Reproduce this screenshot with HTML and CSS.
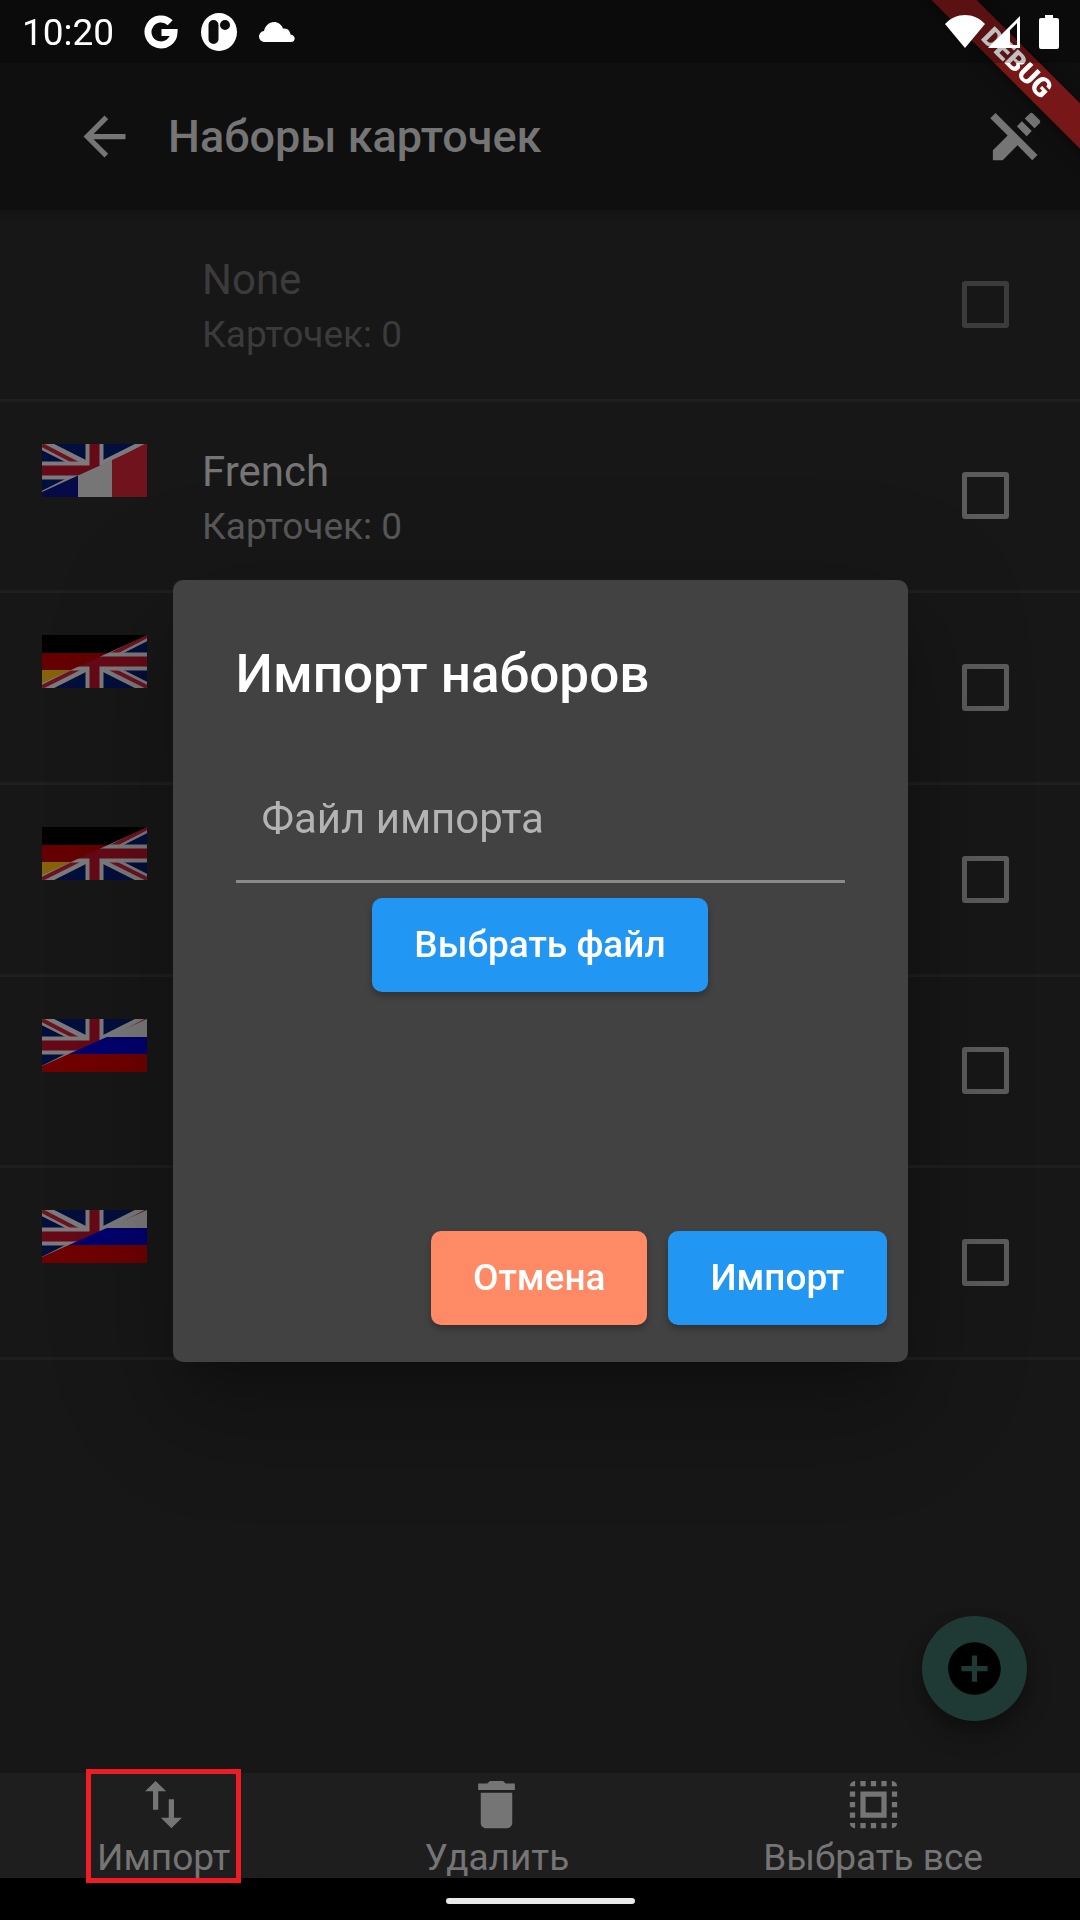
FILE: index.html
```html
<!DOCTYPE html>
<html lang="ru">
<head>
<meta charset="utf-8">
<meta name="viewport" content="width=device-width, initial-scale=1">
<title>Наборы карточек</title>
<link rel="stylesheet" href="styles.css">
</head>
<body>
<svg class="sprite" aria-hidden="true">
  <symbol id="union-jack" viewBox="0 0 105 53" preserveAspectRatio="none">
    <rect width="105" height="53" fill="#000f3c"/>
    <path d="M0 0L105 53M105 0L0 53" stroke="#7c7a7c" stroke-width="11"/>
    <path d="M0 1L52 28M105 1L53 28M52 26L0 52M53 26L105 52" stroke="#6b1420" stroke-width="4"/>
    <path d="M52.500 0V53M0 26.500H105" stroke="#7c7a7c" stroke-width="18"/>
    <path d="M52.500 0V53M0 26.500H105" stroke="#650a16" stroke-width="10"/>
  </symbol>
  <symbol id="flag-fr" viewBox="0 0 105 53">
    <use href="#union-jack" width="105" height="53"/>
    <clipPath id="clip-fr"><path d="M0 48L105 0V53H0Z"/></clipPath>
    <g clip-path="url(#clip-fr)">
      <path fill="#060a46" d="M0 0H36V53H0z"/>
      <path fill="#767676" d="M36 0H70V53H36z"/>
      <path fill="#70131c" d="M70 0H105V53H70z"/>
    </g>
  </symbol>
  <symbol id="flag-de" viewBox="0 0 105 53">
    <use href="#union-jack" width="105" height="53"/>
    <path fill="#000" d="M0 0H105L66 18H0z"/>
    <path fill="#650000" d="M0 18H66L29 35H0z"/>
    <path fill="#846309" d="M0 35H29L0 48z"/>
  </symbol>
  <symbol id="flag-ru" viewBox="0 0 105 53">
    <use href="#union-jack" width="105" height="53"/>
    <clipPath id="clip-ru"><path d="M0 47L105 0V53H0Z"/></clipPath>
    <g clip-path="url(#clip-ru)">
      <path fill="#7a7a7a" d="M0 0H105V18H0z"/>
      <path fill="#00006e" d="M0 18H105V35H0z"/>
      <path fill="#700000" d="M0 35H105V53H0z"/>
    </g>
  </symbol>
</svg>

<div class="status-bar">
  <span class="status-time">10:20</span>
  <div class="status-notices">
    <svg width="36" height="36" viewBox="0 0 36 36"><path d="M27.200 8.800A13 13 0 1 0 31 18.500H18.500" fill="none" stroke="#fff" stroke-width="7"/></svg>
    <svg width="36" height="38" viewBox="0 0 36 38"><path fill="#fff" fill-rule="evenodd" d="M18 0a18 19 0 0 1 0 38a18 19 0 0 1 0-38zM12.500 7a5 5 0 0 0-5 5v14a5 5 0 0 0 10 0V12a5 5 0 0 0-5-5zM24 7a5 5 0 1 0 0 10a5 5 0 0 0 0-10z"/></svg>
    <svg width="36" height="20" viewBox="0 0 36 20"><path fill="#fff" d="M6 20a5.500 5.500 0 0 1-1-11C6 4 10 0 15 0c4 0 7.500 2.500 9 6.500c5-.5 7 2.500 7.500 6C37 13 37 20 32 20z"/></svg>
  </div>
  <div class="status-system">
    <svg width="40" height="34" viewBox="0 0 40 34"><path fill="#fff" d="M0 9C11-3 29-3 40 9L20 33z"/></svg>
    <svg width="34" height="34" viewBox="0 0 34 34"><path fill="#fff" fill-rule="evenodd" d="M33 1V33H1zM30 8L23 15V30H30z"/></svg>
    <svg width="20" height="34" viewBox="0 0 20 34"><path fill="#fff" d="M6 0h8v3h4a2 2 0 0 1 2 2v27a2 2 0 0 1-2 2H2a2 2 0 0 1-2-2V5a2 2 0 0 1 2-2h4z"/></svg>
  </div>
</div>

<div class="screen">
  <header class="app-bar">
    <button class="icon-button" type="button" aria-label="Назад">
      <svg class="icon" viewBox="0 0 24 24"><path d="M20 11H7.830l5.590-5.590L12 4l-8 8 8 8 1.410-1.410L7.830 13H20v-2z"/></svg>
    </button>
    <h1 class="app-title">Наборы карточек</h1>
    <button class="icon-button" type="button" aria-label="Закончить правку">
      <svg class="icon" viewBox="0 0 24 24"><path d="M12.126 8.125l1.937-1.937 3.747 3.747-1.937 1.938zM20.710 5.630l-2.340-2.340a1 1 0 0 0-1.410 0l-1.830 1.830 3.750 3.750 1.830-1.830a1 1 0 0 0 0-1.410zM2 5l6.630 6.630L3 17.250V21h3.750l5.630-5.620L18 21l2-2L4 3 2 5z"/></svg>
    </button>
  </header>

  <main class="content">
    <ul class="deck-list">
      <li class="deck deck-disabled">
        <span class="deck-flag"></span>
        <label class="deck-text" for="deck-1"><span class="deck-name">None</span><span class="deck-count">Карточек: 0</span></label>
        <input class="deck-check" type="checkbox" id="deck-1" disabled>
      </li>
      <li class="deck">
        <svg class="deck-flag"><use href="#flag-fr"/></svg>
        <label class="deck-text" for="deck-2"><span class="deck-name">French</span><span class="deck-count">Карточек: 0</span></label>
        <input class="deck-check" type="checkbox" id="deck-2">
      </li>
      <li class="deck">
        <svg class="deck-flag"><use href="#flag-de"/></svg>
        <span class="deck-text"></span>
        <input class="deck-check" type="checkbox" aria-label="Набор 3">
      </li>
      <li class="deck">
        <svg class="deck-flag"><use href="#flag-de"/></svg>
        <span class="deck-text"></span>
        <input class="deck-check" type="checkbox" aria-label="Набор 4">
      </li>
      <li class="deck">
        <svg class="deck-flag"><use href="#flag-ru"/></svg>
        <span class="deck-text"></span>
        <input class="deck-check" type="checkbox" aria-label="Набор 5">
      </li>
      <li class="deck">
        <svg class="deck-flag"><use href="#flag-ru"/></svg>
        <span class="deck-text"></span>
        <input class="deck-check" type="checkbox" aria-label="Набор 6">
      </li>
    </ul>
    <button class="fab" type="button" aria-label="Добавить набор">
      <svg class="icon" viewBox="0 0 24 24"><path d="M12 2C6.480 2 2 6.480 2 12s4.480 10 10 10 10-4.480 10-10S17.520 2 12 2zm5 11h-4v4h-2v-4H7v-2h4V7h2v4h4v2z"/></svg>
    </button>
  </main>

  <nav class="bottom-bar">
    <button class="bottom-item highlighted" type="button">
      <svg class="icon" viewBox="0 0 24 24"><path d="M9 3L5 6.990h3V14h2V6.990h3L9 3zm7 14.010V10h-2v7.010h-3L15 21l4-3.990h-3z"/></svg>
      <span class="bottom-label">Импорт</span>
    </button>
    <button class="bottom-item" type="button">
      <svg class="icon" viewBox="0 0 24 24"><path d="M6 19c0 1.100.9 2 2 2h8c1.100 0 2-.9 2-2V7.500H6zM19 4h-3.500l-1-1h-5l-1 1H5v2.500h14z"/></svg>
      <span class="bottom-label">Удалить</span>
    </button>
    <button class="bottom-item" type="button">
      <svg class="icon" viewBox="0 0 24 24"><path d="M3 5h2V3c-1.100 0-2 .9-2 2zm0 8h2v-2H3v2zm4 8h2v-2H7v2zM3 9h2V7H3v2zm10-6h-2v2h2V3zm6 0v2h2c0-1.100-.9-2-2-2zM5 21v-2H3c0 1.100.9 2 2 2zm-2-4h2v-2H3v2zM9 3H7v2h2V3zm2 18h2v-2h-2v2zm8-8h2v-2h-2v2zm0 8c1.100 0 2-.9 2-2h-2v2zm0-12h2V7h-2v2zm0 8h2v-2h-2v2zm-4 4h2v-2h-2v2zm0-16h2V3h-2v2zM7 17h10V7H7v10zm2-8h6v6H9V9z"/></svg>
      <span class="bottom-label">Выбрать все</span>
    </button>
  </nav>
  <div class="gesture-bar"><span class="gesture-handle"></span></div>
</div>

<div class="overlay">
  <form class="dialog" role="dialog" aria-modal="true" aria-labelledby="dialog-title">
    <h2 class="dialog-title" id="dialog-title">Импорт наборов</h2>
    <div class="dialog-body">
      <input class="file-field" type="text" placeholder="Файл импорта" aria-label="Файл импорта">
      <button class="button" type="button">Выбрать файл</button>
    </div>
    <div class="dialog-actions">
      <button class="button button-cancel" type="button">Отмена</button>
      <button class="button" type="submit">Импорт</button>
    </div>
  </form>
</div>

<div class="debug-corner"><span class="debug-banner">DEBUG</span></div>
</body>
</html>
```
FILE: styles.css
```css
* {
  box-sizing: border-box;
}

body {
  margin: 0;
  background: #171717;
  color: #757575;
  font-family: Roboto, "Noto Sans", sans-serif;
  font-size: 37px;
  line-height: 43px;
}

button,
input {
  margin: 0;
  padding: 0;
  border: 0;
  background: none;
  color: inherit;
  font: inherit;
}

h1,
h2,
ul {
  margin: 0;
  padding: 0;
}

svg {
  display: block;
}

.sprite {
  position: absolute;
  width: 0;
  height: 0;
}

.icon {
  width: 63px;
  height: 63px;
  fill: currentColor;
}

/* System status bar, drawn over the app */
.status-bar {
  position: fixed;
  inset: 0 0 auto;
  z-index: 4;
  display: flex;
  align-items: center;
  height: 63px;
  padding: 0 21px 0 22px;
  background: rgba(0, 0, 0, 0.25);
  color: #fff;
}

.status-time {
  padding-top: 2px;
}

.status-notices {
  display: flex;
  flex: 1;
  align-items: center;
  gap: 22px;
  margin-left: 29px;
}

.status-system {
  display: flex;
  gap: 2px;
}

.status-system svg:last-child {
  margin-left: 16px;
}

.screen {
  display: flex;
  flex-direction: column;
  min-height: 100vh;
}

/* App bar */
.app-bar {
  position: relative;
  display: flex;
  align-items: center;
  padding: 63px 32px 0 73px;
  min-height: 210px;
  background: #0f0f0f;
  box-shadow: 0 4px 8px rgba(0, 0, 0, 0.2);
}

.app-title {
  flex: 1;
  padding-left: 32px;
  font-size: 45px;
  font-weight: 500;
  line-height: 52px;
}

/* Deck list */
.content {
  position: relative;
  flex: 1;
}

.deck-list {
  display: grid;
  grid-auto-rows: 1fr;
  min-height: 1150px;
  list-style: none;
}

.deck {
  display: flex;
  align-items: flex-start;
  padding: 0 71px 0 42px;
  border-bottom: 3px solid #1f1f1f;
}

.deck-flag {
  flex: none;
  width: 105px;
  height: 53px;
  margin-top: 42px;
}

.deck-text {
  display: flex;
  flex: 1;
  flex-direction: column;
  gap: 9px;
  padding: 45px 0 0 55px;
}

.deck-name {
  font-size: 42px;
  line-height: 49px;
}

.deck-count {
  color: #585858;
}

.deck-check {
  appearance: none;
  flex: none;
  align-self: center;
  width: 47px;
  height: 47px;
  border: 5px solid #5b5b5b;
  border-radius: 3px;
}

.deck-disabled,
.deck-disabled .deck-count {
  color: #3b3b3b;
}

.deck-disabled .deck-check {
  border-color: #3b3b3b;
}

.fab {
  position: absolute;
  right: 53px;
  bottom: 52px;
  display: grid;
  place-items: center;
  width: 105px;
  height: 105px;
  border-radius: 50%;
  background: #1f3a34;
  color: #000;
  box-shadow: 0 14px 24px rgba(0, 0, 0, 0.25), 0 4px 12px rgba(0, 0, 0, 0.2);
}

/* Bottom bar */
.bottom-bar {
  display: flex;
  justify-content: space-around;
  height: 105px;
  background: #1e1e1e;
}

.bottom-item {
  position: relative;
  display: flex;
  flex-direction: column;
  align-items: center;
}

.bottom-label {
  margin-bottom: -2px;
  line-height: 44px;
}

.highlighted {
  z-index: 1;
}

.highlighted::after {
  content: "";
  position: absolute;
  inset: -4px -11px -5px;
  border: 5px solid #ee1c24;
}

.gesture-bar {
  display: grid;
  place-items: center;
  height: 42px;
  padding-top: 4px;
  background: #000;
}

.gesture-handle {
  width: 189px;
  height: 6px;
  border-radius: 3px;
  background: #e9e9e9;
}

/* Import dialog */
.overlay {
  position: fixed;
  inset: 0;
  z-index: 2;
  display: grid;
  place-items: center;
  padding: 63px 0 42px;
}

.dialog {
  width: 735px;
  max-width: 100%;
  border-radius: 10px;
  background: #424242;
  color: #fff;
  box-shadow:
    0 29px 39px -18px rgba(0, 0, 0, 0.2),
    0 63px 100px 8px rgba(0, 0, 0, 0.14),
    0 24px 120px 21px rgba(0, 0, 0, 0.12);
}

.dialog-title {
  padding: 63px 63px 0;
  font-size: 53px;
  font-weight: 500;
  line-height: 62px;
}

.dialog-body {
  display: flex;
  flex-direction: column;
  align-items: center;
  gap: 15px;
  min-height: 490px;
  padding: 52px 63px 0;
}

.file-field {
  width: 100%;
  height: 126px;
  padding: 0 26px;
  border-bottom: 3px solid #8a8a8a;
  font-size: 42px;
  outline: 0;
}

.file-field::placeholder {
  color: #b3b3b3;
  opacity: 1;
}

.button {
  height: 94px;
  padding: 0 42px;
  border-radius: 10px;
  background: #2196f3;
  color: #fff;
  font-weight: 500;
  box-shadow: 0 4px 6px rgba(0, 0, 0, 0.25);
}

.button-cancel {
  background: #ff8a65;
}

.dialog-actions {
  display: flex;
  justify-content: flex-end;
  gap: 21px;
  padding: 36px 21px 37px;
}

/* Debug ribbon */
.debug-corner {
  position: fixed;
  top: 0;
  right: 0;
  z-index: 3;
  width: 180px;
  height: 180px;
  overflow: hidden;
  pointer-events: none;
}

.debug-banner {
  position: absolute;
  top: 47px;
  right: -87px;
  width: 300px;
  background: rgba(183, 28, 28, 0.627);
  color: #fff;
  font-size: 27px;
  font-weight: 900;
  line-height: 32px;
  text-align: center;
  transform: rotate(45deg);
  box-shadow: 0 0 16px rgba(0, 0, 0, 0.5);
}
```
